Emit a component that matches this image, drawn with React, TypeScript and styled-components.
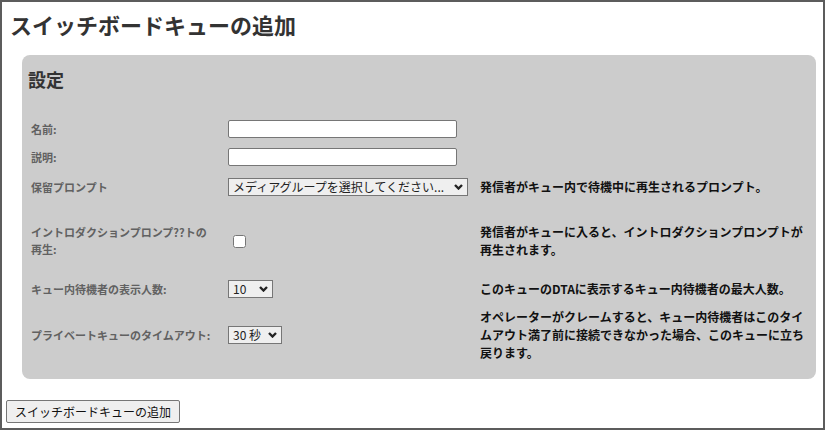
import React from "react";
import styled, { createGlobalStyle } from "styled-components";

const GlobalStyle = createGlobalStyle`
  html, body {
    margin: 0;
    padding: 0;
    background: #fff;
  }
  body {
    font-family: "Noto Sans CJK JP", "Noto Sans", sans-serif;
  }
`;

interface Field {
  label: string;
  control: React.ReactNode;
  help?: string;
  height: number;
}

const Chevron = () => (
  <svg width="9" height="6" viewBox="0 0 9 6">
    <path d="M1 1l3.5 3.5L8 1" fill="none" stroke="#222" strokeWidth="2.4" />
  </svg>
);

const Dropdown: React.FC<{ width: number; options: string[] }> = ({
  width,
  options,
}) => (
  <SelectWrap style={{ width }}>
    <Select>
      {options.map((o) => (
        <option key={o}>{o}</option>
      ))}
    </Select>
    <ChevronSlot>
      <Chevron />
    </ChevronSlot>
  </SelectWrap>
);

const App: React.FC = () => {
  const fields: Field[] = [
    { label: "名前:", control: <TextInput type="text" />, height: 28 },
    { label: "説明:", control: <TextInput type="text" />, height: 28 },
    {
      label: "保留プロンプト",
      control: (
        <Dropdown width={240} options={["メディアグループを選択してください..."]} />
      ),
      help: "発信者がキュー内で待機中に再生されるプロンプト。",
      height: 32,
    },
    {
      label: "イントロダクションプロンプ??トの再生:",
      control: <Check type="checkbox" />,
      help: "発信者がキューに入ると、イントロダクションプロンプトが再生されます。",
      height: 76,
    },
    {
      label: "キュー内待機者の表示人数:",
      control: <Dropdown width={45} options={["10", "20", "30"]} />,
      help: "このキューのDTAに表示するキュー内待機者の最大人数。",
      height: 20,
    },
    {
      label: "プライベートキューのタイムアウト:",
      control: <Dropdown width={54} options={["30 秒", "60 秒"]} />,
      help: "オペレーターがクレームすると、キュー内待機者はこのタイムアウト満了前に接続できなかった場合、このキューに立ち戻ります。",
      height: 72,
    },
  ];

  return (
    <>
      <GlobalStyle />
      <Frame>
        <Title>スイッチボードキューの追加</Title>
        <Panel>
          <PanelTitle>設定</PanelTitle>
          {fields.map((f) => (
            <Row key={f.label} $h={f.height}>
              <Label>{f.label}</Label>
              <Control>{f.control}</Control>
              <Help>{f.help}</Help>
            </Row>
          ))}
        </Panel>
        <SubmitButton>スイッチボードキューの追加</SubmitButton>
      </Frame>
    </>
  );
};

const Frame = styled.div`
  box-sizing: border-box;
  width: 825px;
  height: 430px;
  border: 2px solid #5c5c5c;
  padding: 0 0 0 4px;
  display: flex;
  flex-direction: column;
  align-items: flex-start;
`;

const Title = styled.h1`
  margin: 8px 0 0 4px;
  font-size: 22px;
  line-height: 28px;
  font-weight: bold;
  color: #333;
`;

const Panel = styled.div`
  box-sizing: border-box;
  width: 794px;
  margin: 17px 0 0 16px;
  padding: 13px 6px 8px 6px;
  background: #cccccc;
  border-radius: 8px;
`;

const PanelTitle = styled.h2`
  margin: 0 0 25px 0;
  font-size: 18px;
  line-height: 22px;
  font-weight: bold;
  color: #333;
`;

const Row = styled.div<{ $h: number }>`
  display: grid;
  grid-template-columns: 200px 252px 1fr;
  align-items: center;
  height: ${(p) => p.$h}px;
`;

const Label = styled.div`
  box-sizing: border-box;
  padding: 0 14px 0 3px;
  font-size: 11px;
  line-height: 17px;
  font-weight: bold;
  color: #616161;
`;

const Control = styled.div`
  display: flex;
  align-items: center;
`;

const Help = styled.div`
  font-size: 12px;
  line-height: 18px;
  font-weight: bold;
  color: #111;
`;

const TextInput = styled.input`
  box-sizing: border-box;
  width: 229px;
  height: 18px;
  margin: 0;
  border: 1px solid #767676;
  border-radius: 2px;
  background: #fff;
`;

const SelectWrap = styled.div`
  position: relative;
  height: 18px;
`;

const Select = styled.select`
  display: block;
  box-sizing: border-box;
  appearance: none;
  width: 100%;
  height: 18px;
  margin: 0;
  padding: 0 16px 0 4px;
  border: 1px solid #767676;
  border-radius: 0;
  background: #efefef;
  font-family: "Noto Sans CJK JP", sans-serif;
  font-size: 12px;
  line-height: 16px;
  color: #222;
  overflow: hidden;
  text-overflow: ellipsis;
  white-space: nowrap;
`;

const ChevronSlot = styled.span`
  position: absolute;
  right: 5px;
  top: 0;
  bottom: 0;
  display: flex;
  align-items: center;
  pointer-events: none;
`;

const Check = styled.input`
  width: 13px;
  height: 13px;
  margin: 0 0 0 5px;
`;

const SubmitButton = styled.button`
  margin: 21px 0 0 0;
  padding: 2px 8px;
  border: 1px solid #767676;
  border-radius: 2px;
  background: #efefef;
  font-family: "Noto Sans CJK JP", sans-serif;
  font-size: 12px;
  line-height: 17px;
  color: #111;
`;

export default App;
